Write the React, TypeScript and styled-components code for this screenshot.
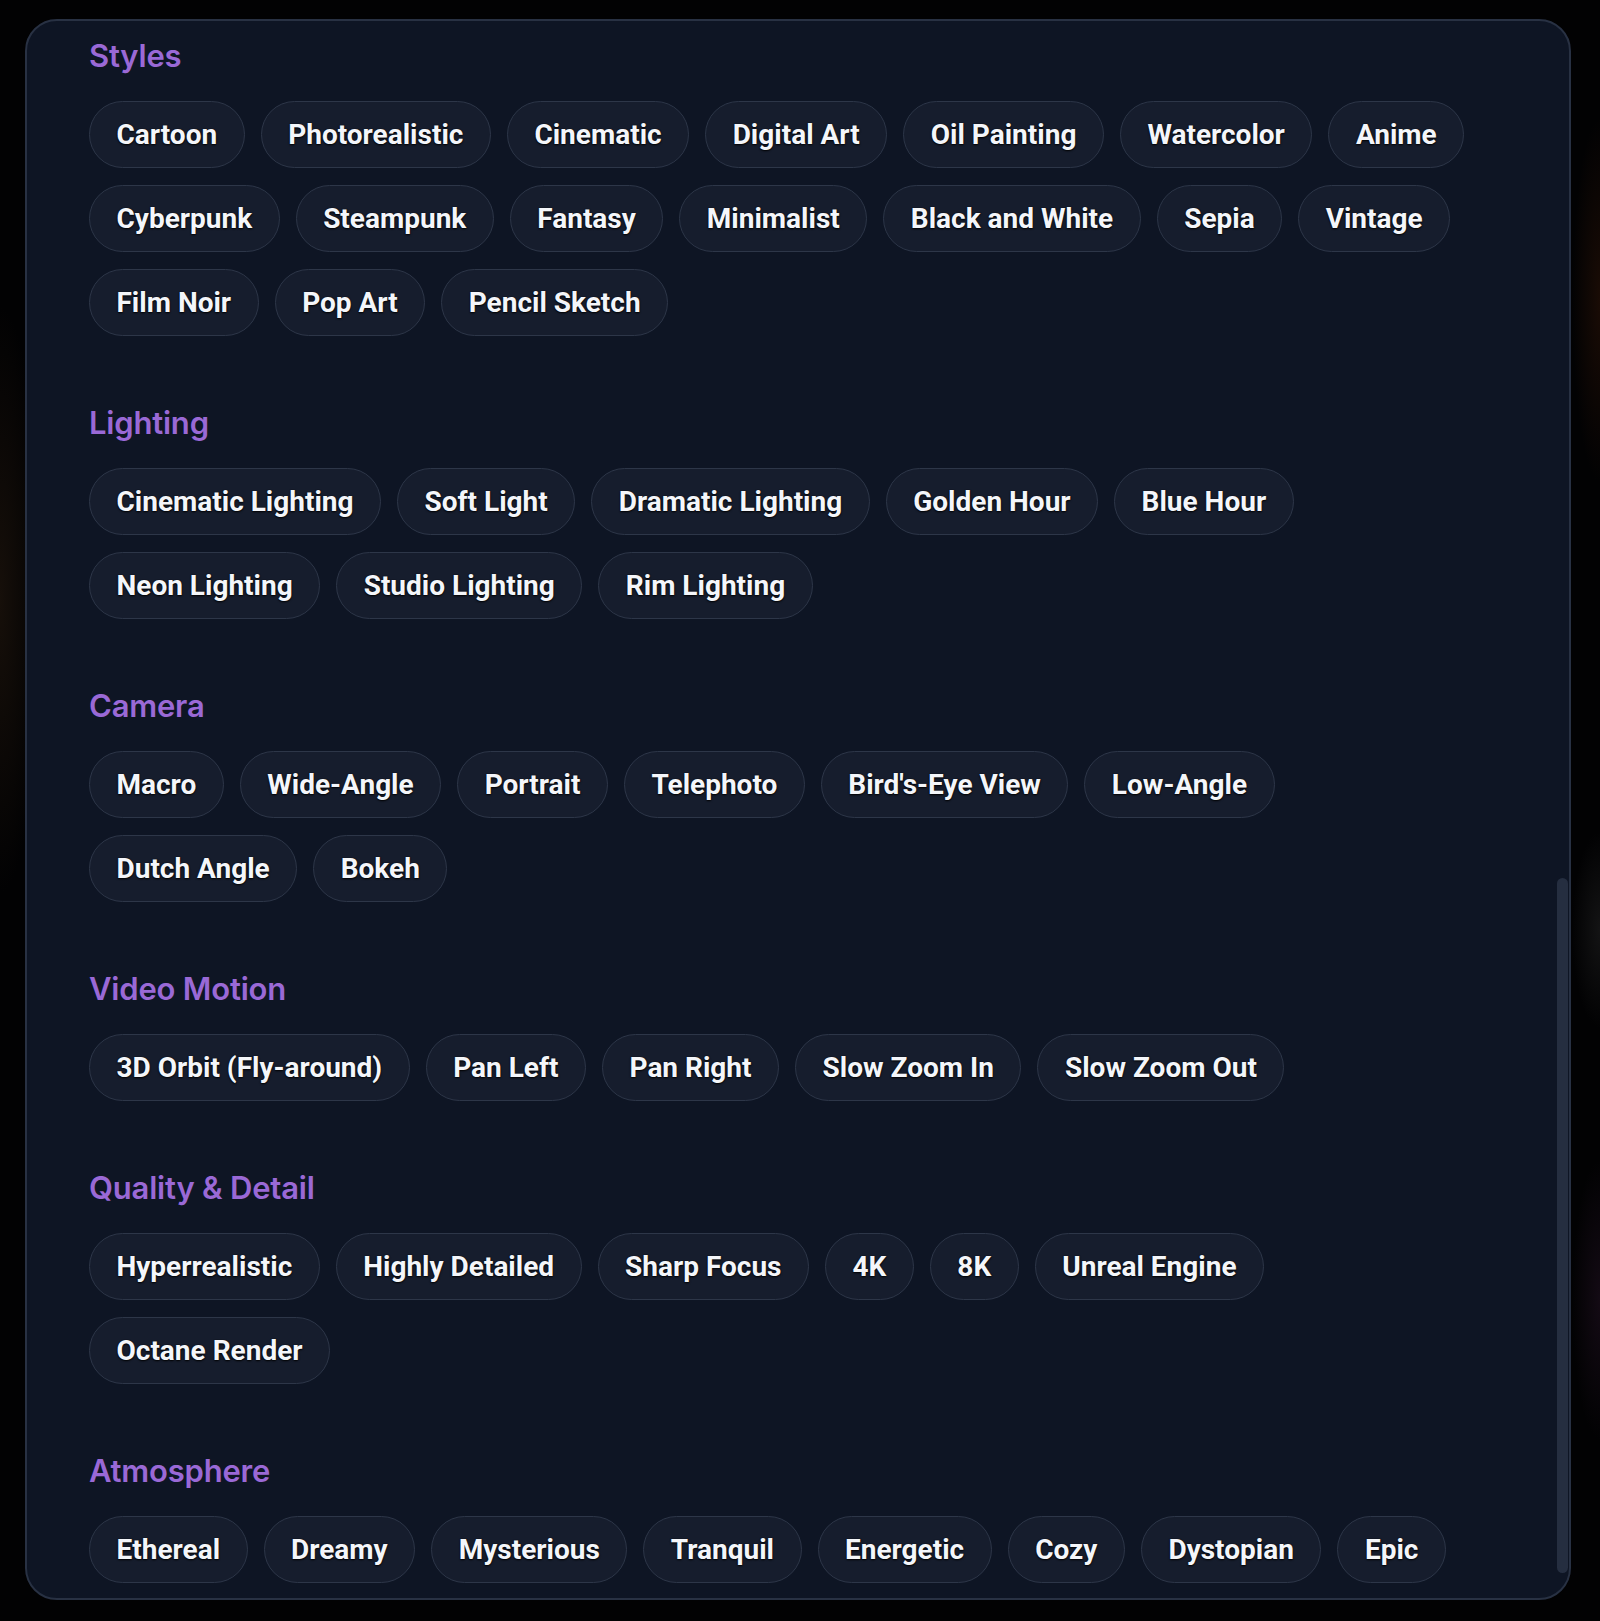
import styled, { createGlobalStyle } from 'styled-components'

type Section = { title: string; rows: string[][] }

const sections: Section[] = [
  {
    title: 'Styles',
    rows: [
      ['Cartoon', 'Photorealistic', 'Cinematic', 'Digital Art', 'Oil Painting', 'Watercolor', 'Anime'],
      ['Cyberpunk', 'Steampunk', 'Fantasy', 'Minimalist', 'Black and White', 'Sepia', 'Vintage'],
      ['Film Noir', 'Pop Art', 'Pencil Sketch'],
    ],
  },
  {
    title: 'Lighting',
    rows: [
      ['Cinematic Lighting', 'Soft Light', 'Dramatic Lighting', 'Golden Hour', 'Blue Hour'],
      ['Neon Lighting', 'Studio Lighting', 'Rim Lighting'],
    ],
  },
  {
    title: 'Camera',
    rows: [
      ['Macro', 'Wide-Angle', 'Portrait', 'Telephoto', "Bird's-Eye View", 'Low-Angle'],
      ['Dutch Angle', 'Bokeh'],
    ],
  },
  {
    title: 'Video Motion',
    rows: [['3D Orbit (Fly-around)', 'Pan Left', 'Pan Right', 'Slow Zoom In', 'Slow Zoom Out']],
  },
  {
    title: 'Quality & Detail',
    rows: [
      ['Hyperrealistic', 'Highly Detailed', 'Sharp Focus', '4K', '8K', 'Unreal Engine'],
      ['Octane Render'],
    ],
  },
  {
    title: 'Atmosphere',
    rows: [['Ethereal', 'Dreamy', 'Mysterious', 'Tranquil', 'Energetic', 'Cozy', 'Dystopian', 'Epic']],
  },
]

const Global = createGlobalStyle`
  * { box-sizing: border-box; }
  body {
    margin: 0;
    background:
      radial-gradient(ellipse 60px 420px at 0px 600px, rgba(60,40,22,.35), transparent 70%),
      radial-gradient(ellipse 40px 260px at 1600px 300px, rgba(70,30,10,.35), transparent 70%),
      radial-gradient(ellipse 40px 140px at 1600px 930px, rgba(60,60,60,.3), transparent 70%),
      radial-gradient(ellipse 40px 200px at 1600px 1300px, rgba(60,30,60,.3), transparent 70%),
      #020203;
    font-family: Inter, "Noto Sans", "Liberation Sans", sans-serif;
  }
`

const Page = styled.div`
  width: 1600px;
  height: 1621px;
  padding: 19px 29px 21px 25px;
`

const Panel = styled.div`
  position: relative;
  height: 1581px;
  overflow: hidden;
  background: #0e1524;
  border: 2px solid #283143;
  border-radius: 32px;
  padding: 15px 76px 0 62px;
  display: flex;
  flex-direction: column;
  gap: 67px;
`

// scroll thumb, the list is scrolled to its end
const Thumb = styled.div`
  position: absolute;
  top: 857px;
  right: 1px;
  width: 11px;
  height: 695px;
  border-radius: 6px;
  background: #252e40;
`

const Group = styled.section`
  display: flex;
  flex-direction: column;
`

const Heading = styled.h3`
  margin: 0 0 25px;
  font-size: 31px;
  line-height: 40px;
  font-weight: 600;
  color: #9a69d6;
  letter-spacing: -0.2px;
`

const Rows = styled.div`
  display: flex;
  flex-direction: column;
  gap: 17px;
`

const Row = styled.div`
  display: flex;
  gap: 16px;
`

const Chip = styled.button`
  height: 67px;
  padding: 0 26.5px;
  border: 1.5px solid #2d3648;
  border-radius: 999px;
  background: #161d2d;
  color: #f4f6fa;
  font-family: Roboto, Inter, "Liberation Sans", sans-serif;
  font-size: 28px;
  font-weight: 700;
  white-space: nowrap;
  text-shadow: 0 1px 2px rgba(0, 0, 0, 0.95), 0 0 1px rgba(0, 0, 0, 0.9);
  cursor: pointer;
`

export default function App() {
  return (
    <Page>
      <Global />
      <Panel>
        {sections.map(s => (
          <Group key={s.title}>
            <Heading>{s.title}</Heading>
            <Rows>
              {s.rows.map((row, i) => (
                <Row key={i}>
                  {row.map(tag => (
                    <Chip key={tag}>{tag}</Chip>
                  ))}
                </Row>
              ))}
            </Rows>
          </Group>
        ))}
        <Thumb />
      </Panel>
    </Page>
  )
}
